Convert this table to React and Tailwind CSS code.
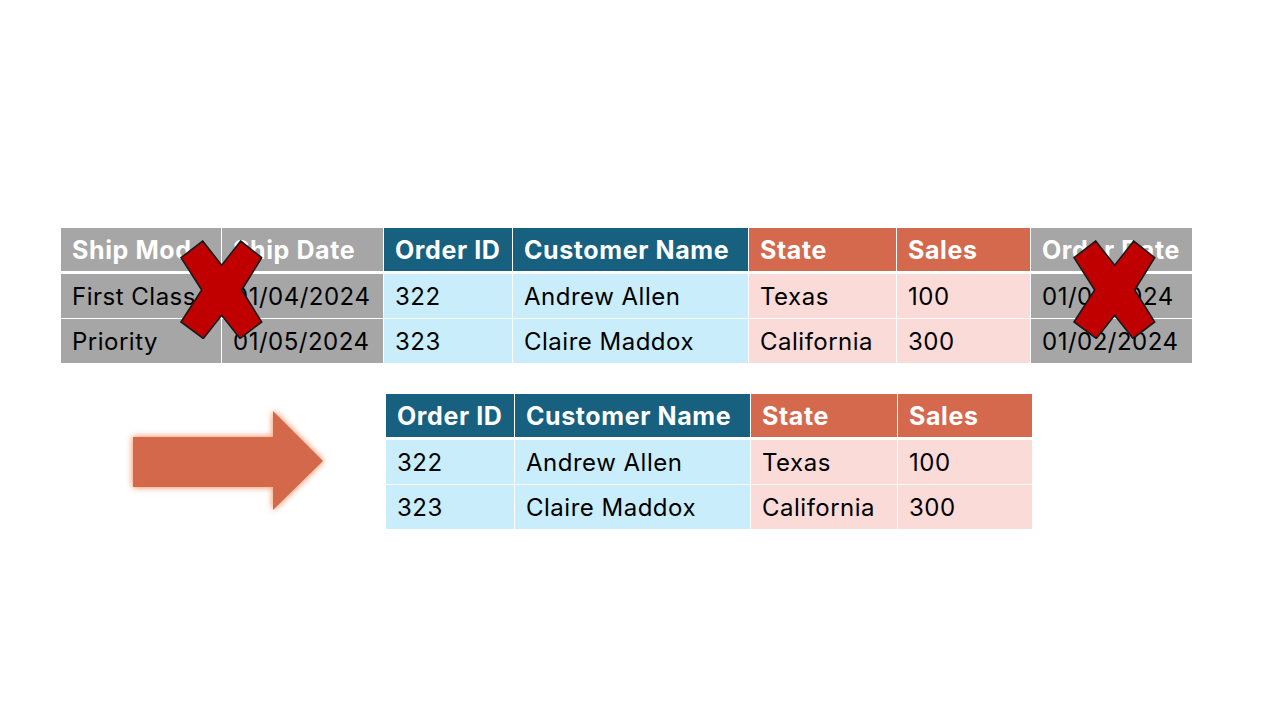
const font = { fontFamily: "Inter, 'Liberation Sans', sans-serif" };

const topCols = [
  { w: "w-[161px]", head: "Ship Mode", kind: "gray", rows: ["First Class", "Priority"] },
  { w: "w-[162px]", head: "Ship Date", kind: "gray", rows: ["01/04/2024", "01/05/2024"] },
  { w: "w-[129px]", head: "Order ID", kind: "blue", rows: ["322", "323"] },
  { w: "w-[236px]", head: "Customer Name", kind: "blue", rows: ["Andrew Allen", "Claire Maddox"] },
  { w: "w-[148px]", head: "State", kind: "orange", rows: ["Texas", "California"] },
  { w: "w-[134px]", head: "Sales", kind: "orange", rows: ["100", "300"] },
  { w: "w-[161px]", head: "Order Date", kind: "gray", rows: ["01/01/2024", "01/02/2024"] },
];

const bottomCols = [
  { w: "w-[129px]", head: "Order ID", kind: "blue", rows: ["322", "323"] },
  { w: "w-[236px]", head: "Customer Name", kind: "blue", rows: ["Andrew Allen", "Claire Maddox"] },
  { w: "w-[147px]", head: "State", kind: "orange", rows: ["Texas", "California"] },
  { w: "w-[134px]", head: "Sales", kind: "orange", rows: ["100", "300"] },
];

const headBg = {
  gray: "bg-[#a6a6a6]",
  blue: "bg-[#17607f]",
  orange: "bg-[#d4694e]",
};

const bodyBg = {
  gray: "bg-[#a6a6a6]",
  blue: "bg-[#caedfb]",
  orange: "bg-[#fadbd8]",
};

function DataTable({ cols }) {
  return (
    <div className="flex flex-col">
      <div className="flex border-b-[3px] border-white">
        {cols.map((c, i) => (
          <div
            key={c.head}
            className={`${c.w} ${headBg[c.kind]} h-[43px] flex items-center pl-[11px] pt-[3px] text-white font-bold text-[25px] tracking-[0.6px] whitespace-nowrap overflow-hidden ${
              i < cols.length - 1 ? "border-r border-white" : ""
            }`}
          >
            {c.head}
          </div>
        ))}
      </div>
      {[0, 1].map((r) => (
        <div key={r} className={`flex ${r === 0 ? "border-b border-white" : ""}`}>
          {cols.map((c, i) => (
            <div
              key={c.head}
              className={`${c.w} ${bodyBg[c.kind]} h-[44px] flex items-center pl-[11px] pt-[1px] text-black text-[24px] tracking-[0.5px] whitespace-nowrap overflow-hidden ${
                i < cols.length - 1 ? "border-r border-white" : ""
              }`}
            >
              {c.rows[r]}
            </div>
          ))}
        </div>
      ))}
    </div>
  );
}

function CrossMark({ className }) {
  return (
    <svg
      className={className}
      width="83"
      height="99"
      viewBox="-1 -1 83 99"
    >
      <polygon
        points="0,16.7 21.7,0 40.7,24.3 59.7,0 80.7,16.7 60.7,49 80.7,81 59,97.5 40.7,74.3 22.3,97.5 0,81 20.7,49"
        fill="#c00000"
        stroke="#1a1a1a"
        strokeWidth="1.6"
        strokeLinejoin="miter"
      />
    </svg>
  );
}

function Arrow() {
  return (
    <svg width="205" height="115" viewBox="0 0 205 115">
      <defs>
        <filter id="glow" x="-20%" y="-20%" width="140%" height="140%">
          <feGaussianBlur in="SourceAlpha" stdDeviation="3" result="b" />
          <feFlood floodColor="#f6a67e" floodOpacity="0.9" />
          <feComposite in2="b" operator="in" result="g" />
          <feMerge>
            <feMergeNode in="g" />
            <feMergeNode in="g" />
            <feMergeNode in="SourceGraphic" />
          </feMerge>
        </filter>
      </defs>
      <polygon
        points="8,33 148,33 148,7 198,57 148,106 148,83 8,83"
        fill="#d4684c"
        filter="url(#glow)"
      />
    </svg>
  );
}

export default function App() {
  return (
    <div className="w-[1280px] h-[720px] bg-white overflow-hidden" style={font}>
      <div className="pt-[228px] pl-[61px] relative">
        <DataTable cols={topCols} />
        <CrossMark className="absolute left-[180px] top-[240px]" />
        <CrossMark className="absolute left-[1073px] top-[240px]" />
      </div>
      <div className="flex items-start mt-[31px] pl-[125px]">
        <div className="mt-[10px]">
          <Arrow />
        </div>
        <div className="ml-[56px]">
          <DataTable cols={bottomCols} />
        </div>
      </div>
    </div>
  );
}
